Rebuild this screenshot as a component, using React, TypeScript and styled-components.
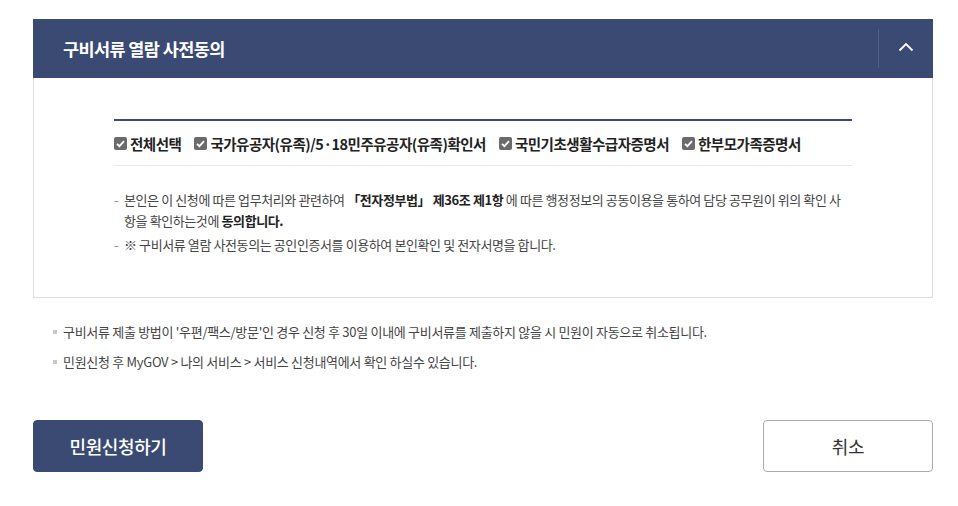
import React from "react"
import styled, { createGlobalStyle } from "styled-components"

const navy = "#3a4a72"

const GlobalStyle = createGlobalStyle`
  * { box-sizing: border-box; }
  body {
    margin: 0;
    background: #fff;
    font-family: "Noto Sans CJK KR", "Noto Sans", sans-serif;
    color: #333;
    letter-spacing: -0.4px;
  }
`

const checks = [
  "전체선택",
  "국가유공자(유족)/5·18민주유공자(유족)확인서",
  "국민기초생활수급자증명서",
  "한부모가족증명서",
]

function CheckIcon(): JSX.Element {
  return (
    <svg width="13" height="13" viewBox="0 0 13 13">
      <rect x="0" y="0" width="13" height="13" rx="2" fill="#6b6b6b" />
      <path d="M3 6.8 L5.4 9.1 L10 4.2" fill="none" stroke="#fff" strokeWidth="1.8" />
    </svg>
  )
}

function App(): JSX.Element {
  return (
    <Page>
      <GlobalStyle />
      <Panel>
        <PanelHeader>
          <h2>구비서류 열람 사전동의</h2>
          <Toggle>
            <svg width="16" height="10" viewBox="0 0 16 10">
              <path d="M1.5 8.5 L8 2 L14.5 8.5" fill="none" stroke="#fff" strokeWidth="1.8" />
            </svg>
          </Toggle>
        </PanelHeader>
        <PanelBody>
          <CheckRow>
            {checks.map((c) => (
              <CheckItem key={c}>
                <CheckIcon />
                <span>{c}</span>
              </CheckItem>
            ))}
          </CheckRow>
          <DashList>
            <li>
              본인은 이 신청에 따른 업무처리와 관련하여 <b>「전자정부법」 제36조 제1항</b> 에 따른 행정정보의 공동이용을 통하여 담당 공무원이 위의 확인 사항을 확인하는것에 <b>동의합니다.</b>
            </li>
            <li>※ 구비서류 열람 사전동의는 공인인증서를 이용하여 본인확인 및 전자서명을 합니다.</li>
          </DashList>
        </PanelBody>
      </Panel>
      <Notes>
        <li>구비서류 제출 방법이 '우편/팩스/방문'인 경우 신청 후 30일 이내에 구비서류를 제출하지 않을 시 민원이 자동으로 취소됩니다.</li>
        <li>민원신청 후 MyGOV &gt; 나의 서비스 &gt; 서비스 신청내역에서 확인 하실수 있습니다.</li>
      </Notes>
      <Buttons>
        <Button primary>민원신청하기</Button>
        <Button>취소</Button>
      </Buttons>
    </Page>
  )
}

const Page = styled.div`
  width: 958px;
  padding: 19px 26px 0 33px;
`

const Panel = styled.section`
  width: 900px;
`

const PanelHeader = styled.div`
  height: 59px;
  background: ${navy};
  display: flex;
  align-items: center;
  justify-content: space-between;
  padding-left: 30px;
  h2 {
    margin: 0;
    color: #fff;
    font-size: 17.5px;
    font-weight: 700;
    letter-spacing: -0.6px;
  }
`

const Toggle = styled.button`
  width: 55px;
  height: 39px;
  border: 0;
  border-left: 1px solid #4f5f86;
  background: transparent;
  display: flex;
  align-items: center;
  justify-content: center;
  padding: 0 0 4px 0;
`

const PanelBody = styled.div`
  border: 1px solid #dcdcdc;
  border-top: 0;
  padding: 41px 80px 39px 80px;
`

const CheckRow = styled.div`
  border-top: 2px solid ${navy};
  border-bottom: 1px solid #e8e8e8;
  display: flex;
  gap: 13px;
  padding: 12px 0 11px;
`

const CheckItem = styled.label`
  display: flex;
  align-items: center;
  gap: 3px;
  font-size: 14.5px;
  font-weight: 700;
  color: #222;
  letter-spacing: -0.5px;
`

const DashList = styled.ul`
  list-style: none;
  margin: 23px 0 0;
  padding: 0;
  li {
    position: relative;
    padding-left: 10px;
    font-size: 13px;
    line-height: 21px;
    color: #444;
    margin-bottom: 3px;
  }
  li::before {
    content: "-";
    position: absolute;
    left: 0;
    top: 0;
    color: #888;
  }
  b {
    color: #222;
    font-weight: 700;
  }
`

const Notes = styled.ul`
  list-style: none;
  margin: 23px 0 0;
  padding: 0 0 0 20px;
  li {
    position: relative;
    padding-left: 10px;
    font-size: 13px;
    line-height: 22px;
    color: #444;
    margin-bottom: 8px;
    letter-spacing: -0.3px;
  }
  li::before {
    content: "";
    position: absolute;
    left: 0;
    top: 9px;
    width: 4px;
    height: 4px;
    background: #c8c8c8;
  }
`

const Buttons = styled.div`
  width: 900px;
  display: flex;
  justify-content: space-between;
  margin-top: 47px;
`

const Button = styled.button<{ primary?: boolean }>`
  width: 170px;
  height: 52px;
  border-radius: 4px;
  font-family: inherit;
  letter-spacing: -0.4px;
  font-size: 18px;
  font-weight: ${(p) => (p.primary ? 500 : 400)};
  background: ${(p) => (p.primary ? navy : "#fff")};
  color: ${(p) => (p.primary ? "#fff" : "#333")};
  border: 1px solid ${(p) => (p.primary ? navy : "#aaa")};
`

export default App
